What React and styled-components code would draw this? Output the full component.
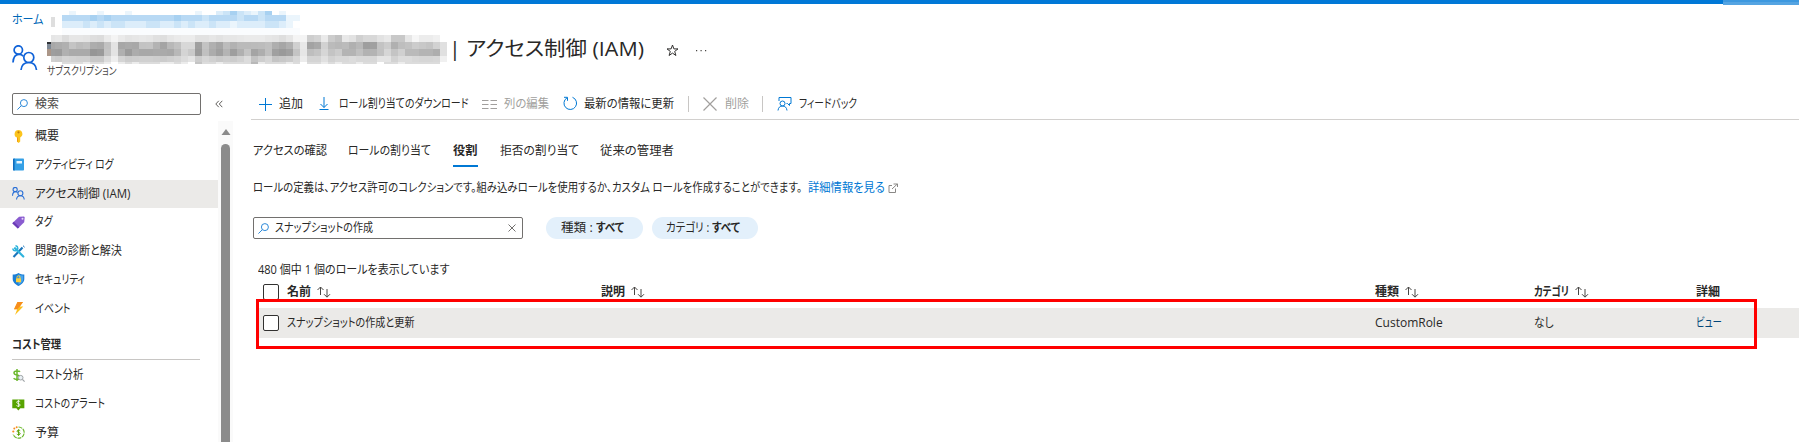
import React from "react";
import styled, { createGlobalStyle, css } from "styled-components";

const Global = createGlobalStyle`
  * { box-sizing: border-box; }
  html, body { margin: 0; padding: 0; background: #fff; overflow: hidden; }
  body {
    font-family: "Open Sans", "Noto Sans CJK JP", sans-serif;
    font-size: 12px;
    color: #292827;
    font-feature-settings: "palt";
  }
`;

const Page = styled.div`
  width: 1799px;
  height: 442px;
  overflow: hidden;
  display: flex;
  flex-direction: column;
`;

/* $fit = [set width, natural width]: condenses the kana to the set width */
const Text = styled.span`
  display: block;
  flex: none;
  white-space: pre;
  font-size: ${(p) => p.$size || 12}px;
  line-height: ${(p) => (p.$size || 12) + 8}px;
  font-weight: ${(p) => (p.$bold ? 700 : 400)};
  color: ${(p) => p.$color || "inherit"};
  ${(p) =>
    p.$fit &&
    css`
      width: ${p.$fit[0]}px;
      transform: scaleX(${(p.$fit[0] / p.$fit[1]).toFixed(4)});
      transform-origin: left center;
    `}
`;

/* Top bar */
const TopBar = styled.div`
  flex: none;
  height: 5px;
  display: flex;
  align-items: flex-start;
`;
const TopBarMain = styled.div`
  width: 1723px;
  height: 4px;
  background: #0078d7;
`;
const TopBarSearch = styled.div`
  flex: 1;
  height: 5px;
  background: #55a4e2;
  border-top: 2px solid #3d98df;
`;

/* Masked names */
const MaskRow = styled.div`
  display: flex;
  height: ${(p) => p.$h}px;
`;
const MaskCell = styled.i`
  flex: none;
  width: ${(p) => p.$w || 7}px;
  height: 100%;
  background: ${(p) => p.$c};
`;
const MaskBlock = styled.div`
  flex: none;
  width: ${(p) => p.$w}px;
`;

const Breadcrumb = styled.nav`
  flex: none;
  height: 30px;
  padding-left: 12px;
  display: flex;
  align-items: flex-start;
`;
const Crumb = styled.div`
  width: 39px;
  padding-top: 5px;
`;
const CrumbSeparator = styled.div`
  width: 11px;
  height: 10px;
  margin-top: 12px;
  border-left: 4px solid #dedede;
`;
const CrumbMask = styled(MaskBlock)`
  margin-top: 6px;
`;

const TitleBar = styled.header`
  flex: none;
  height: 53px;
  padding-left: 12px;
  display: flex;
  align-items: flex-start;
`;
const TitleIcon = styled.div`
  width: 35px;
  padding-top: 10px;
`;
const TitleNames = styled.div`
  width: 402px;
`;
const TitleMask = styled.div`
  display: flex;
  height: 29px;
`;
const TitleMaskEdge = styled.div`
  flex: none;
  width: 4px;
  height: 14px;
  margin-top: 7px;
  background: linear-gradient(#2f3236 0 2px, #7d8894 2px 7px, #ab9688 7px);
`;
const Subtitle = styled.div`
  margin-top: -3px;
`;
const TitleActions = styled.div`
  display: flex;
  align-items: center;
  gap: 17px;
  height: 28px;
  margin-left: 22px;
  padding-top: 3px;
`;

const Body = styled.div`
  flex: 1;
  min-height: 0;
  display: flex;
`;
const Sidebar = styled.aside`
  width: 251px;
  flex: none;
  display: flex;
  flex-direction: column;
`;
const SidebarTop = styled.div`
  height: 33px;
  flex: none;
  display: flex;
  align-items: flex-start;
  padding: 5px 0 0 12px;
`;
const Field = styled.div`
  width: ${(p) => p.$w}px;
  height: 22px;
  flex: none;
  display: flex;
  align-items: center;
  border: 1px solid #72706e;
  border-radius: 2px;
  padding: 0 6px 0 4px;
`;
const FieldIcon = styled.div`
  width: ${(p) => p.$w}px;
  display: flex;
`;
const FieldText = styled.div`
  flex: 1;
`;
const Collapse = styled.div`
  display: flex;
  padding: 7px 0 0 14px;
`;
const SidebarBody = styled.div`
  flex: 1;
  min-height: 0;
  display: flex;
`;
const Menu = styled.div`
  width: 218px;
  padding-top: 1px;
  overflow: hidden;
`;
const MenuItem = styled.div`
  height: 28px;
  margin-bottom: 0.75px;
  padding-left: 12px;
  display: flex;
  align-items: center;
  gap: 10px;
  background: ${(p) => (p.$active ? "#ebeae8" : "transparent")};
`;
const MenuIcon = styled.div`
  width: 13px;
  height: 13px;
  display: flex;
`;
const MenuHeading = styled.div`
  width: 188px;
  height: 37px;
  margin: 0 0 1px 12px;
  padding-top: 12px;
  border-bottom: 1px solid #c8c6c4;
`;
const Scrollbar = styled.div`
  width: 15px;
  background: #fafafa;
  display: flex;
  flex-direction: column;
  align-items: center;
  padding-top: 8px;
`;
const ScrollThumb = styled.div`
  width: 9px;
  flex: 1;
  margin-top: 9px;
  border-radius: 5px 5px 0 0;
  background: #8b8b8b;
`;

const Main = styled.main`
  flex: 1;
  min-width: 0;
`;
const Toolbar = styled.div`
  height: 32px;
  display: flex;
  align-items: center;
  padding: 0 0 0 7px;
  border-bottom: 1px solid #d2d0ce;
`;
const Tool = styled.div`
  display: flex;
  flex: none;
  align-items: center;
  width: ${(p) => p.$w}px;
  color: ${(p) => (p.$disabled ? "#a19f9d" : "inherit")};
`;
const ToolIcon = styled.div`
  width: ${(p) => p.$w}px;
  flex: none;
  display: flex;
`;
const ToolDivider = styled.div`
  width: 1px;
  height: 16px;
  margin-right: 14px;
  background: #c8c6c4;
`;

const Tabs = styled.div`
  display: flex;
  padding-left: 2px;
  height: 47px;
  align-items: flex-end;
`;
const Tab = styled.div`
  height: 28px;
  padding-top: 2px;
  margin-right: ${(p) => p.$gap}px;
  border-bottom: 2px solid ${(p) => (p.$active ? "#0078d4" : "transparent")};
`;
const Description = styled.div`
  display: flex;
  align-items: center;
  padding-left: 2px;
  height: 20px;
  margin-top: 11px;
`;
const DescriptionText = styled.div`
  width: 555px;
`;
const DescriptionLink = styled.div`
  width: 80px;
  color: #0078d4;
`;
const Filters = styled.div`
  display: flex;
  padding: 19px 0 0 2px;
`;
const Pill = styled.div`
  height: 22px;
  width: ${(p) => p.$w}px;
  margin-left: ${(p) => p.$gap}px;
  padding-left: ${(p) => p.$pad}px;
  border-radius: 11px;
  background: #e3f0fb;
  display: flex;
  align-items: center;
`;
const Count = styled.div`
  padding: 21px 0 0 7px;
`;

const grid = css`
  display: grid;
  grid-template-columns: 24px 314px 774px 159px 162px 1fr;
  align-items: center;
`;
const HeadRow = styled.div`
  ${grid}
  height: 24px;
  padding-left: 12px;
`;
const HeadCell = styled.div`
  display: flex;
  align-items: center;
  gap: 5px;
`;
const Highlight = styled.div`
  position: relative;
  margin: 4px 0 0 8px;
`;
const DataRow = styled.div`
  ${grid}
  height: 30px;
  padding-left: 4px;
  background: #ebeae8;
`;
const HighlightFrame = styled.div`
  position: absolute;
  left: -3px;
  top: -9px;
  width: 1501px;
  height: 50px;
  border: 3px solid #ff0000;
  pointer-events: none;
`;
const Checkbox = styled.div`
  width: 16px;
  height: 16px;
  border: 1px solid #323130;
  border-radius: 2px;
  background: #fff;
`;

const Svg = ({ w = 13, h = w, box = `0 0 ${w} ${h}`, children, ...rest }) => (
  <svg width={w} height={h} viewBox={box} fill="none" {...rest}>
    {children}
  </svg>
);

const People = ({ size, stroke, color }) => (
  <Svg w={size} box="0 0 26 26" stroke={color} strokeWidth={stroke}>
    <circle cx="6.3" cy="5" r="4.2" />
    <circle cx="16.8" cy="12.5" r="5" />
    <path d="M1 17.5C1.3 12.5 3.5 9.3 7 9.3c1.800 0 3.200.6 4.200 1.800M9 25c.5-5 3.500-7.500 7.800-7.500s7.200 2.500 7.700 7.500" />
  </Svg>
);
const Magnifier = () => (
  <Svg w={11} stroke="#2b88d8">
    <circle cx="6.900" cy="4.100" r="3.500" />
    <path d="M4.300 6.700L.4 10.600" />
  </Svg>
);
const Sort = () => (
  <Svg w={15} h={12} stroke="#484644">
    <path d="M4.500 9V1M1.500 4l3-3 3 3M11 3v8M8 8.200l3 3 3-3" />
  </Svg>
);

const icons = {
  key: (
    <Svg w={13}>
      <path d="M6.500 0a3.900 3.900 0 0 1 1.700 7.400v4.100L6.700 13 5 11.400V7.500A3.900 3.900 0 0 1 6.500 0z" fill="#fcc41c" />
      <path d="M5 7.500v3.900L6 12.300V7.500z" fill="#f09a10" />
      <circle cx="6.500" cy="2.300" r="1.100" fill="#c27c0a" />
    </Svg>
  ),
  log: (
    <Svg w={13}>
      <rect x="1" y="0.500" width="11" height="12" rx="0.800" fill="#35a0e6" />
      <path d="M1.800 .5H2.600v12H1.800A.8.8 0 0 1 1 11.700V1.300z" fill="#0f6cbd" />
      <rect x="4.500" y="3" width="5.500" height="2.500" fill="#e8f5fd" />
    </Svg>
  ),
  people: <People size={13} stroke={2.2} color="#2a6fd6" />,
  tag: (
    <Svg w={13}>
      <path d="M.3 7.300L7 .8 12 .5l.7.8-.5 5L5.800 12.600z" fill="#8a5cd0" />
      <path d="M.3 7.300l5.500 5.300 1.500-1.400L1.900 5.700z" fill="#6a3bb5" />
      <circle cx="10.500" cy="2.700" r="1" fill="#e6d8fa" />
    </Svg>
  ),
  tools: (
    <Svg w={13}>
      <path d="M1.500 12l9-9.500" stroke="#1b75bb" strokeWidth="2.100" />
      <path d="M11 .7L12.600 2.200" stroke="#1b75bb" strokeWidth="1" />
      <path d="M3 3.200l8.300 8.300" stroke="#2fb4dd" strokeWidth="2.200" strokeLinecap="round" />
      <path d="M3.500 .7A2.500 2.500 0 1 1 .8 3.500" stroke="#2fb4dd" strokeWidth="1.500" />
    </Svg>
  ),
  shield: (
    <Svg w={13}>
      <path d="M6.500 0C8.500 1.300 10 1.600 12.300 1.600V6c0 3.500-3 5.500-5.800 7C3.700 11.500.7 9.500.7 6V1.600C3 1.600 4.500 1.300 6.500 0z" fill="#1b7fd6" />
      <path d="M6.500 1.300c1.600.9 2.800 1.200 4.700 1.300V6c0 2.800-2.200 4.400-4.700 5.700z" fill="#4aa5ea" />
      <rect x="4" y="5.300" width="5" height="4" rx=".5" fill="#ffd039" />
      <path d="M5 5.500V4.300a1.500 1.500 0 0 1 3 0v1.200" stroke="#ffd039" />
    </Svg>
  ),
  bolt: (
    <Svg w={13}>
      <path d="M5.500 0H11L7.800 4.600h3.500L3 13l2.200-5.700H2z" fill="#fcc01c" />
      <path d="M5.500 0H11L7.800 4.600 5.200 7.300H2z" fill="#f78d1e" />
    </Svg>
  ),
  costSearch: (
    <Svg w={13}>
      <path d="M8 2.800C7.200 1.700 2 1.200 2 3.900c0 2.600 6.200 1.700 6.200 4.600 0 2.500-5.200 2.300-6.600.8M5 0v12" stroke="#6cb82e" strokeWidth="1.500" />
      <circle cx="8.700" cy="8.700" r="2.300" fill="#e9f0f4" stroke="#a0a5a8" />
      <path d="M10.400 10.400l2.200 2.200" stroke="#a0a5a8" strokeWidth="1.200" />
    </Svg>
  ),
  costAlert: (
    <Svg w={14} h={13}>
      <path d="M.3 1h13v9.500H9L6.800 13 4.700 10.500H.3z" fill="#57a300" />
      <path d="M8.800 3.500C8.200 2.600 5 2.500 5 4.100c0 1.700 3.800 1.200 3.800 3 0 1.600-3.200 1.500-4 .5M6.900 1.500v7.700" stroke="#fff" strokeWidth=".9" />
    </Svg>
  ),
  budget: (
    <Svg w={13}>
      <path d="M6.500 1a5.600 5.600 0 1 1-5.300 7.200" stroke="#6cb82e" strokeWidth="1.200" strokeDasharray="4 .8" />
      <path d="M8.200 4.700C7.700 4 5 3.900 5 5.200c0 1.400 3.200 1 3.200 2.500 0 1.300-2.700 1.200-3.400.3M6.600 3.300v6.500" stroke="#57a300" strokeWidth="1" />
      <circle cx="1.300" cy="5.500" r="1.100" fill="#f78d1e" />
      <circle cx="2.300" cy="2.600" r="1" fill="#f78d1e" />
      <circle cx="4.700" cy="1.200" r="1" fill="#f78d1e" />
    </Svg>
  ),
};

const titleMask = [
  [7, "e6 e8 dc e6 e6 e4 de dc ea f4 ea e4 e6 e8 e6 e0 de e6 ea ec ec e2 e2 e6 e2 e6 e6 e8 ea ea ea e6 e4 de e6 f4 f4 ce d4 ea cc c2 e8 e2 d0 d8 d8 e2 e8 c8 c8 e6 f6 ec ec f0 ff"],
  [7, "a8 ac b0 c4 bc c0 ad aa c2 e3 a7 aa a8 c3 c4 b3 a4 b8 c1 d8 d8 a0 c3 b0 a6 bc b2 ba ba bb bc c0 ae a6 b0 d0 e8 a3 a9 d2 bb b8 bb b0 b8 9e a0 c3 cc b0 be c2 cc c8 c4 d2 e0"],
  [7, "9e 9c b0 aa aa aa 96 9a c4 e3 b0 9c ac a8 a8 aa aa a8 b8 d4 ca 9c c0 ac a0 b4 9e b0 c4 a4 ae c0 a0 9a a0 c4 e6 be c4 d6 c4 cc b4 b4 c0 b2 b4 c2 d6 c4 d0 ba ba b4 b4 ae e0"],
  [6, "d0 cc d4 d2 d0 d0 c8 c8 dc ee d4 cc ce d0 d0 ce cc d0 d4 dc e4 cc d6 d0 ca ce cc d2 dc c2 ce d6 c4 c8 cc d8 ec d4 d4 e0 d2 d8 d8 dc d8 d8 d8 e4 e4 d2 dc dc d8 d6 d6 d8 f0"],
  [2, "ff ff dc dc dc ec dc dc ec ff ec dc ec dc dc dc ec ec dc ec ff c4 dc dc ec dc dc dc dc b8 ec dc dc dc ec dc ff dc dc ec dc ec dc dc ec dc dc ff dc dc ec dc dc dc dc dc ff"],
];
const blues = ["#ffffff", "#fafcfe", "#ebf5fc", "#dcedfa", "#cbe4f7", "#b8d9f4", "#a8d1f1"];
const crumbMask = [
  [4, "0200020002000000000200346432460200"],
  [6, "5555656555555555655545555455455522"],
  [7, "3334343443334433434334332333344320"],
  [7, "1111111111111111111111111111111111"],
];

const Mask = ({ rows }) =>
  rows.map(([h, cells], r) => (
    <MaskRow key={r} $h={h}>
      {cells.includes(" ")
        ? cells.split(" ").map((c, i) => <MaskCell key={i} $w={i ? 7 : 4} $c={`#${c}${c}${c}`} />)
        : [...cells].map((c, i) => <MaskCell key={i} $c={blues[c]} />)}
    </MaskRow>
  ));

const menuTop = [
  ["key", "概要"],
  ["log", "アクティビティ ログ", [78.5, 96.9]],
  ["people", "アクセス制御 (IAM)", [95.5, 99.5]],
  ["tag", "タグ", [17.5, 21.4]],
  ["tools", "問題の診断と解決", [87, 94.2]],
  ["shield", "セキュリティ", [50, 62.1]],
  ["bolt", "イベント", [35.5, 42.7]],
];
const menuCost = [
  ["costSearch", "コスト分析", [48.5, 55.4]],
  ["costAlert", "コストのアラート", [70, 85.6]],
  ["budget", "予算"],
];

const Item = ({ entry: [icon, label, fit] }) => (
  <MenuItem $active={icon === "people"}>
    <MenuIcon>{icons[icon]}</MenuIcon>
    <Text $fit={fit}>{label}</Text>
  </MenuItem>
);

export default function App() {
  return (
    <Page>
      <Global />
      <TopBar>
        <TopBarMain />
        <TopBarSearch />
      </TopBar>
      <Breadcrumb>
        <Crumb>
          <Text $color="#0067b8" $fit={[31.5, 34.3]}>ホーム</Text>
        </Crumb>
        <CrumbSeparator />
        <CrumbMask $w={238}>
          <Mask rows={crumbMask} />
        </CrumbMask>
      </Breadcrumb>
      <TitleBar>
        <TitleIcon>
          <People size={26} stroke={1.7} color="#0f62d8" />
        </TitleIcon>
        <TitleNames>
          <TitleMask>
            <TitleMaskEdge />
            <MaskBlock $w={396}>
              <Mask rows={titleMask} />
            </MaskBlock>
          </TitleMask>
          <Subtitle>
            <Text $size={11} $color="#484644" $fit={[69.5, 87]}>サブスクリプション</Text>
          </Subtitle>
        </TitleNames>
        <Text $size={20} $fit={[195, 182]}>| アクセス制御 (IAM)</Text>
        <TitleActions>
          <Svg w={13} stroke="#323130">
            <path d="M6.500 1l1.400 3.900h4.100L8.700 7.400l1.200 4.100-3.400-2.400-3.400 2.400 1.200-4.100L1 4.900h4.100z" />
          </Svg>
          <Svg w={11} h={2}>
            <path d="M0 0h1.200v1.200H0zM4.500 0h1.200v1.200H4.500zM9 0h1.200v1.200H9z" fill="#484644" />
          </Svg>
        </TitleActions>
      </TitleBar>
      <Body>
        <Sidebar>
          <SidebarTop>
            <Field $w={189}>
              <FieldIcon $w={18}><Magnifier /></FieldIcon>
              <Text $color="#484644">検索</Text>
            </Field>
            <Collapse>
              <Svg w={8} stroke="#605e5c">
                <path d="M3.800.8L.8 4l3 3.200M7.300.8l-3 3.200 3 3.200" />
              </Svg>
            </Collapse>
          </SidebarTop>
          <SidebarBody>
            <Menu>
              {menuTop.map((m) => <Item key={m[0]} entry={m} />)}
              <MenuHeading><Text $bold $fit={[49, 57.1]}>コスト管理</Text></MenuHeading>
              {menuCost.map((m) => <Item key={m[0]} entry={m} />)}
            </Menu>
            <Scrollbar>
              <Svg w={10} h={6}><path d="M5 0l4.500 6H.5z" fill="#8b8b8b" /></Svg>
              <ScrollThumb />
            </Scrollbar>
          </SidebarBody>
        </Sidebar>
        <Main>
          <Toolbar>
            <Tool $w={61}>
              <ToolIcon $w={21}><Svg w={14} stroke="#0078d4"><path d="M7.500 1v13M1 7.500h13" /></Svg></ToolIcon>
              <Text>追加</Text>
            </Tool>
            <Tool $w={163}>
              <ToolIcon $w={20}><Svg w={10} h={13} stroke="#0078d4"><path d="M5 0v10.500M1.500 7L5 10.500 8.500 7M.5 12.500h9" /></Svg></ToolIcon>
              <Text $fit={[129.5, 156.8]}>ロール割り当てのダウンロード</Text>
            </Tool>
            <Tool $w={81} $disabled>
              <ToolIcon $w={22}><Svg w={15} h={10} stroke="#a19f9d"><path d="M0 1.500h6.500M0 5.500h6.500M0 9.500h6.500M8.500 1.500H15M8.500 5.500H15M8.500 9.500H15" /></Svg></ToolIcon>
              <Text $fit={[45, 47.6]}>列の編集</Text>
            </Tool>
            <Tool $w={125}>
              <ToolIcon $w={21}><Svg w={15} h={15} stroke="#0078d4"><path d="M9.500 1.300a6.300 6.300 0 1 1-5.500.5M1 1.300h3.500v3.500" /></Svg></ToolIcon>
              <Text $fit={[90, 95.1]}>最新の情報に更新</Text>
            </Tool>
            <ToolDivider />
            <Tool $w={59} $disabled>
              <ToolIcon $w={22}><Svg w={14} stroke="#a19f9d" strokeWidth="1.200"><path d="M.5.5l13 13M13.500.5l-13 13" /></Svg></ToolIcon>
              <Text>削除</Text>
            </Tool>
            <ToolDivider />
            <Tool $w={90}>
              <ToolIcon $w={22}><Svg w={16} h={14} stroke="#0078d4"><circle cx="5.500" cy="6.500" r="2.500" /><path d="M1 13.500c.3-3 2-4.500 4.500-4.500s4.200 1.500 4.500 4.500M2 4V.5h12v6h-1.500v2l-2-2H9.500" /></Svg></ToolIcon>
              <Text $fit={[58, 71.9]}>フィードバック</Text>
            </Tool>
          </Toolbar>
          <Tabs>
            <Tab $gap={21}><Text $fit={[74, 79.1]}>アクセスの確認</Text></Tab>
            <Tab $gap={22}><Text $fit={[83, 91.4]}>ロールの割り当て</Text></Tab>
            <Tab $gap={22} $active><Text $bold $fit={[25, 24.5]}>役割</Text></Tab>
            <Tab $gap={21}><Text $fit={[79, 80.6]}>拒否の割り当て</Text></Tab>
            <Tab><Text $fit={[74, 71.6]}>従来の管理者</Text></Tab>
          </Tabs>
          <Description>
            <DescriptionText>
              <Text $fit={[549, 633.1]}>ロールの定義は、アクセス許可のコレクションです。組み込みロールを使用するか、カスタム ロールを作成することができます。</Text>
            </DescriptionText>
            <DescriptionLink><Text $fit={[77, 81.8]}>詳細情報を見る</Text></DescriptionLink>
            <Svg w={10} stroke="#8a8886"><path d="M4 2.500H1v7h6.500V5.500M5.500 1h4v3M9.300 1L4 6" /></Svg>
          </Description>
          <Filters>
            <Field $w={270}>
              <FieldIcon $w={17}><Magnifier /></FieldIcon>
              <FieldText><Text $fit={[98, 117]}>スナップショットの作成</Text></FieldText>
              <Svg w={8} stroke="#72706e"><path d="M.5.5l7 7M7.500.5l-7 7" /></Svg>
            </Field>
            <Pill $w={97} $gap={23} $pad={15}>
              <Text $fit={[35, 33.4]}>種類 : </Text>
              <Text $bold $fit={[28, 31.8]}>すべて</Text>
            </Pill>
            <Pill $w={106} $gap={9} $pad={14}>
              <Text $fit={[46, 52.5]}>カテゴリ : </Text>
              <Text $bold $fit={[28, 31.8]}>すべて</Text>
            </Pill>
          </Filters>
          <Count><Text $fit={[191.5, 208.3]}>480 個中 1 個のロールを表示しています</Text></Count>
          <HeadRow>
            <Checkbox />
            <HeadCell><Text $bold>名前</Text><Sort /></HeadCell>
            <HeadCell><Text $bold>説明</Text><Sort /></HeadCell>
            <HeadCell><Text $bold>種類</Text><Sort /></HeadCell>
            <HeadCell><Text $bold $fit={[35, 44.4]}>カテゴリ</Text><Sort /></HeadCell>
            <HeadCell><Text $bold>詳細</Text></HeadCell>
          </HeadRow>
          <Highlight>
            <DataRow>
              <Checkbox />
              <Text $fit={[127.5, 151.6]}>スナップショットの作成と更新</Text>
              <span />
              <Text>CustomRole</Text>
              <Text $fit={[19.5, 21.9]}>なし</Text>
              <Text $color="#004578" $fit={[26, 33]}>ビュー</Text>
            </DataRow>
            <HighlightFrame />
          </Highlight>
        </Main>
      </Body>
    </Page>
  );
}
